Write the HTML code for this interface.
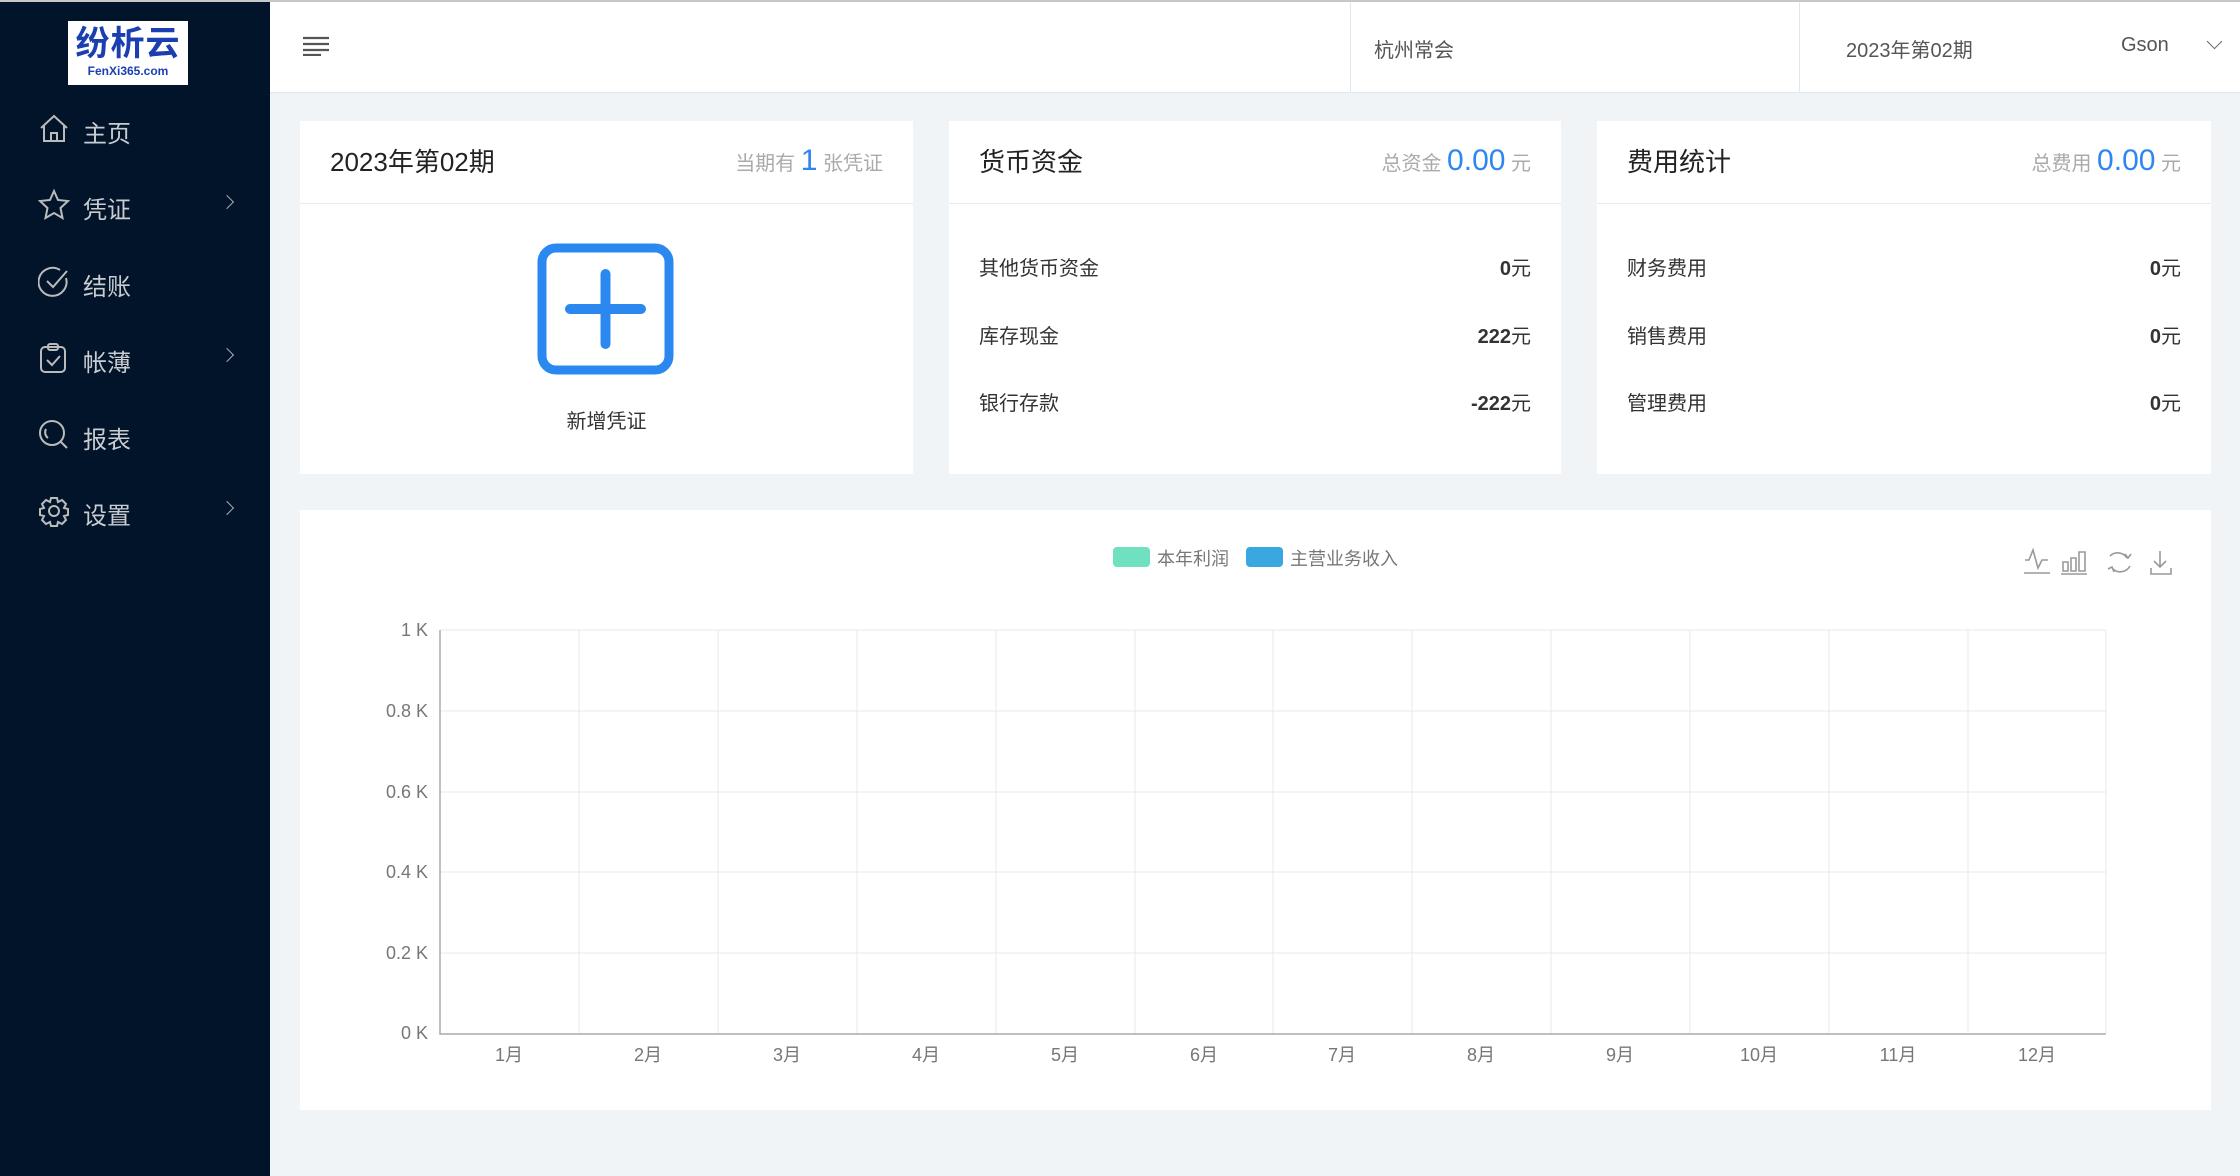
<!DOCTYPE html>
<html><head><meta charset="utf-8"><style>
*{margin:0;padding:0;box-sizing:border-box}
body{width:2240px;height:1176px;overflow:hidden;background:#f1f4f7;font-family:"Liberation Sans","Noto Sans CJK SC",sans-serif;position:relative}
.topline{position:absolute;left:0;top:0;width:2240px;height:2px;background:#c8c8c8;z-index:5}
.side{position:absolute;left:0;top:2px;width:270px;height:1174px;background:#011429}
.logo{position:absolute;left:68px;top:19px;width:120px;height:64px;background:#fff;text-align:center;color:#1b3fb0;font-weight:bold}
.logo .a{font-size:34px;line-height:40px;margin-top:3px;letter-spacing:1px}
.logo .b{font-size:12px;line-height:14px}
.mi{position:absolute;left:0;width:270px;height:40px;color:#c9ccd1;font-size:24px}
.mi svg{position:absolute;left:38px;top:3px}
.mi span{position:absolute;left:83px;top:4px}
.mi i{position:absolute;left:222px;top:11px;width:10px;height:10px;border-top:1.5px solid #aaa;border-right:1.5px solid #aaa;transform:rotate(45deg)}
.hdr{position:absolute;left:270px;top:2px;width:1970px;height:91px;background:#fff;border-bottom:1px solid #e4e7ea}
.card{position:absolute;background:#fff}
.ch{height:83px;border-bottom:1px solid #e8eaec;position:relative}
.ct{position:absolute;left:30px;top:21px;font-size:26px;color:#222}
.cr{position:absolute;right:30px;top:23px;font-size:20px;color:#aaa}
.cr b{font-weight:normal;color:#2e86f0;font-size:30px}
.row{position:absolute;left:30px;right:30px;font-size:20px;color:#333}
.row em{font-style:normal;position:absolute;right:0;top:0}
.row em b{font-weight:bold}
.lab{position:absolute;font-size:18px;color:#777}
</style></head><body>
<div class="topline"></div>
<div class="side">
<div class="logo"><div class="a">纷析云</div><div class="b">FenXi365.com</div></div>
<div class="mi" style="top:108px"><svg width="32" height="32" viewBox="0 0 32 32" fill="none" stroke="#bbb" stroke-width="2"><path d="M3 15L16 3l13 12M6 13v15h20V13M13 28v-8h6v8"/></svg><span>主页</span></div>
<div class="mi" style="top:184px"><svg width="32" height="32" viewBox="0 0 32 32" fill="none" stroke="#bbb" stroke-width="2"><path d="M16 2l4 9 10 1-7.5 7 2 10L16 24l-8.5 5 2-10L2 12l10-1z"/></svg><span>凭证</span><i></i></div>
<div class="mi" style="top:261px"><svg width="32" height="32" viewBox="0 0 32 32" fill="none" stroke="#bbb" stroke-width="2"><path d="M28 12A14 14 0 1 1 22 4"/><path d="M9 15l6 6L29 5"/></svg><span>结账</span></div>
<div class="mi" style="top:337px"><svg width="32" height="32" viewBox="0 0 32 32" fill="none" stroke="#bbb" stroke-width="2"><rect x="3" y="5" width="24" height="25" rx="4"/><rect x="10" y="2" width="10" height="6" rx="2"/><path d="M9 18l5 5 8-9"/></svg><span>帐薄</span><i></i></div>
<div class="mi" style="top:414px"><svg width="32" height="32" viewBox="0 0 32 32" fill="none" stroke="#bbb" stroke-width="2"><circle cx="14" cy="14" r="12"/><path d="M23 23l6 6M8 10a7 7 0 0 0 2 9"/></svg><span>报表</span></div>
<div class="mi" style="top:490px"><svg width="32" height="32" viewBox="0 0 32 32" fill="none" stroke="#bbb" stroke-width="2"><circle cx="16" cy="16" r="5"/><path d="M13 3h6l1 4 4-2 4 4-2 4 4 1v6l-4 1 2 4-4 4-4-2-1 4h-6l-1-4-4 2-4-4 2-4-4-1v-6l4-1-2-4 4-4 4 2z"/></svg><span>设置</span><i></i></div>
</div>
<div class="hdr">
<svg style="position:absolute;left:33px;top:34px" width="26" height="20"><path d="M0 2h26M0 8h26M0 14h26M0 19h18" stroke="#555" stroke-width="2.2"/></svg>
<div style="position:absolute;left:1080px;top:0;width:450px;height:91px;border-left:1px solid #e4e7ea;border-right:1px solid #e4e7ea"></div>
<div style="position:absolute;left:1104px;top:32px;font-size:20px;color:#555">杭州常会</div>
<div style="position:absolute;left:1576px;top:32px;font-size:20px;color:#555">2023年第02期</div>
<div style="position:absolute;left:1851px;top:32px;font-size:20px;color:#555">Gson</div>
<div style="position:absolute;left:1939px;top:34px;width:11px;height:11px;border-right:1.5px solid #666;border-bottom:1.5px solid #666;transform:rotate(45deg)"></div>
</div>

<div class="card" style="left:300px;top:121px;width:613px;height:353px">
<div class="ch"><div class="ct">2023年第02期</div><div class="cr">当期有 <b>1</b> 张凭证</div></div>
<svg style="position:absolute;left:237px;top:122px" width="137" height="132" viewBox="0 0 137 132"><rect x="5" y="5" width="127" height="122" rx="14" fill="none" stroke="#2b88f0" stroke-width="9"/><path d="M33 66h71M68.5 31v70" stroke="#2b88f0" stroke-width="10" stroke-linecap="round"/></svg>
<div style="position:absolute;left:0;width:613px;top:284px;text-align:center;font-size:20px;color:#333">新增凭证</div>
</div>
<div class="card" style="left:949px;top:121px;width:612px;height:353px">
<div class="ch"><div class="ct">货币资金</div><div class="cr">总资金 <b>0.00</b> 元</div></div>
<div class="row" style="top:131px">其他货币资金<em><b>0</b>元</em></div>
<div class="row" style="top:199px">库存现金<em><b>222</b>元</em></div>
<div class="row" style="top:266px">银行存款<em><b>-222</b>元</em></div>
</div>
<div class="card" style="left:1597px;top:121px;width:614px;height:353px">
<div class="ch"><div class="ct">费用统计</div><div class="cr">总费用 <b>0.00</b> 元</div></div>
<div class="row" style="top:131px">财务费用<em><b>0</b>元</em></div>
<div class="row" style="top:199px">销售费用<em><b>0</b>元</em></div>
<div class="row" style="top:266px">管理费用<em><b>0</b>元</em></div>
</div>

<div class="card" style="left:300px;top:510px;width:1911px;height:600px"></div>
<div style="position:absolute;left:1113px;top:547px;width:37px;height:20px;border-radius:4px;background:#6fe0c0"></div>
<div class="lab" style="left:1157px;top:545px">本年利润</div>
<div style="position:absolute;left:1246px;top:547px;width:37px;height:20px;border-radius:4px;background:#3aa7e0"></div>
<div class="lab" style="left:1290px;top:545px">主营业务收入</div>
<svg style="position:absolute;left:2020px;top:546px" width="160" height="32" viewBox="0 0 160 32" fill="none" stroke="#999" stroke-width="1.6"><path d="M5 14h4l4-10 5 18 4-8h6M4 27h26"/><path d="M43 25V16h5v9zM51 25V12h5v13zM59 25V6h6v19zM41 28h26"/><path d="M90 10a11 11 0 0 1 17 2M110 20a11 11 0 0 1-17 3M105 8l3 4 3-4M88 23l4-2 2 5"/><path d="M140 5v16M134 15l6 6 6-6M131 22v6h20v-6"/></svg>
<svg style="position:absolute;left:0;top:0" width="2240" height="1176">
<g stroke="#e8e8ec" stroke-width="1">
<path d="M440 630H2106M440 711H2106M440 792H2106M440 872H2106M440 953H2106"/>
<path d="M579 630V1033M718 630V1033M857 630V1033M996 630V1033M1135 630V1033M1273 630V1033M1412 630V1033M1551 630V1033M1690 630V1033M1829 630V1033M1968 630V1033M2106 630V1033"/>
</g>
<path d="M440 630V1034H2106" stroke="#aaa" stroke-width="1.5" fill="none"/>
<g font-family="Liberation Sans,Noto Sans CJK SC,sans-serif" font-size="18" fill="#777" text-anchor="end">
<text x="428" y="636">1 K</text><text x="428" y="717">0.8 K</text><text x="428" y="798">0.6 K</text><text x="428" y="878">0.4 K</text><text x="428" y="959">0.2 K</text><text x="428" y="1039">0 K</text>
</g>
<g font-family="Liberation Sans,Noto Sans CJK SC,sans-serif" font-size="18" fill="#777" text-anchor="middle">
<text x="509" y="1061">1月</text><text x="648" y="1061">2月</text><text x="787" y="1061">3月</text><text x="926" y="1061">4月</text><text x="1065" y="1061">5月</text><text x="1204" y="1061">6月</text><text x="1342" y="1061">7月</text><text x="1481" y="1061">8月</text><text x="1620" y="1061">9月</text><text x="1759" y="1061">10月</text><text x="1898" y="1061">11月</text><text x="2037" y="1061">12月</text>
</g>
</svg>
</body></html>
